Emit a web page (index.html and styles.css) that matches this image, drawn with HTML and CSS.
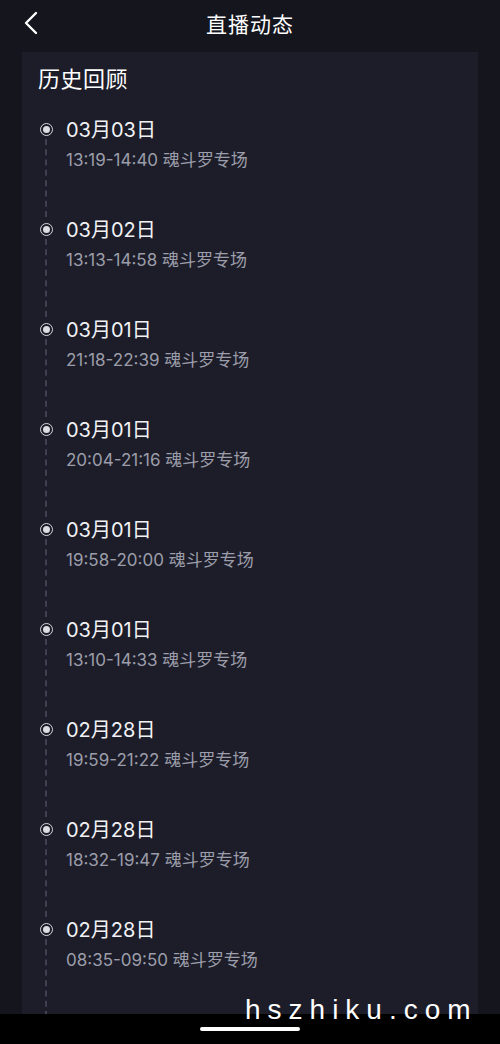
FILE: index.html
```html
<!DOCTYPE html>
<html lang="zh-CN">
<head>
    <meta charset="UTF-8">
    <meta name="viewport" content="width=device-width, initial-scale=1.0">
    <title>直播动态</title>
    <link rel="stylesheet" href="styles.css">
</head>
<body>
    <div class="page">
        <header class="topbar">
            <a href="#" class="back" aria-label="返回">
                <svg width="14" height="24" viewBox="0 0 14 24">
                    <path d="M12 2 L2 12 L12 22" fill="none" stroke="#fff" stroke-width="2.4" stroke-linecap="round" stroke-linejoin="round"/>
                </svg>
            </a>
            <h1>直播动态</h1>
        </header>

        <!-- 历史回顾 -->
        <section class="card">
            <h2>历史回顾</h2>
            <ul class="timeline">
                <li class="item">
                    <div class="rail"><span class="dot"></span><span class="line"></span></div>
                    <div class="info">
                        <div class="date">03月03日</div>
                        <div class="time">13:19-14:40 魂斗罗专场</div>
                    </div>
                </li>
                <li class="item">
                    <div class="rail"><span class="dot"></span><span class="line"></span></div>
                    <div class="info">
                        <div class="date">03月02日</div>
                        <div class="time">13:13-14:58 魂斗罗专场</div>
                    </div>
                </li>
                <li class="item">
                    <div class="rail"><span class="dot"></span><span class="line"></span></div>
                    <div class="info">
                        <div class="date">03月01日</div>
                        <div class="time">21:18-22:39 魂斗罗专场</div>
                    </div>
                </li>
                <li class="item">
                    <div class="rail"><span class="dot"></span><span class="line"></span></div>
                    <div class="info">
                        <div class="date">03月01日</div>
                        <div class="time">20:04-21:16 魂斗罗专场</div>
                    </div>
                </li>
                <li class="item">
                    <div class="rail"><span class="dot"></span><span class="line"></span></div>
                    <div class="info">
                        <div class="date">03月01日</div>
                        <div class="time">19:58-20:00 魂斗罗专场</div>
                    </div>
                </li>
                <li class="item">
                    <div class="rail"><span class="dot"></span><span class="line"></span></div>
                    <div class="info">
                        <div class="date">03月01日</div>
                        <div class="time">13:10-14:33 魂斗罗专场</div>
                    </div>
                </li>
                <li class="item">
                    <div class="rail"><span class="dot"></span><span class="line"></span></div>
                    <div class="info">
                        <div class="date">02月28日</div>
                        <div class="time">19:59-21:22 魂斗罗专场</div>
                    </div>
                </li>
                <li class="item">
                    <div class="rail"><span class="dot"></span><span class="line"></span></div>
                    <div class="info">
                        <div class="date">02月28日</div>
                        <div class="time">18:32-19:47 魂斗罗专场</div>
                    </div>
                </li>
                <li class="item">
                    <div class="rail"><span class="dot"></span><span class="line"></span></div>
                    <div class="info">
                        <div class="date">02月28日</div>
                        <div class="time">08:35-09:50 魂斗罗专场</div>
                    </div>
                </li>
            </ul>
        </section>

        <footer class="homebar">
            <span class="indicator"></span>
        </footer>
        <div class="watermark">hszhiku.com</div>
    </div>
</body>
</html>
```

FILE: styles.css
```css
* {
    margin: 0;
    padding: 0;
    box-sizing: border-box;
}
body {
    font-family: 'Inter', 'Noto Sans CJK SC', sans-serif;
    background-color: #14151d;
    color: #fff;
    width: 500px;
    height: 1044px;
    overflow: hidden;
}
.page {
    position: relative;
    display: flex;
    flex-direction: column;
    height: 100%;
}
.topbar {
    position: relative;
    height: 46px;
    display: flex;
    align-items: center;
    justify-content: center;
}
.topbar h1 {
    font-size: 21px;
    font-weight: 400;
    letter-spacing: 1px;
}
.back {
    position: absolute;
    left: 24px;
    top: 11px;
    display: flex;
}
.card {
    flex: 1;
    margin: 6px 22px 0;
    padding: 12px 16px 0;
    background-color: #1c1d29;
    overflow: hidden;
}
.card h2 {
    font-size: 22px;
    font-weight: 400;
    line-height: 30px;
    letter-spacing: 0.5px;
    margin-bottom: 23px;
}
.timeline {
    list-style: none;
}
.item {
    display: grid;
    grid-template-columns: 16px 1fr;
    column-gap: 12px;
    height: 100px;
}
.rail {
    display: flex;
    flex-direction: column;
    align-items: center;
}
.dot {
    width: 13px;
    height: 13px;
    margin-top: 6px;
    border-radius: 50%;
    border: 1.5px solid #d4d5dc;
    display: flex;
    align-items: center;
    justify-content: center;
}
.dot::after {
    content: "";
    width: 7px;
    height: 7px;
    border-radius: 50%;
    background-color: #dcdde3;
}
.line {
    flex: 1;
    margin-top: 3px;
    border-left: 2px dashed #3f4152;
}
.date {
    font-size: 20px;
    line-height: 26px;
    color: #f2f2f5;
}
.time {
    margin-top: 6px;
    font-size: 17px;
    line-height: 22px;
    color: #9c9daa;
}
.homebar {
    height: 30px;
    background-color: #000;
    display: flex;
    justify-content: center;
}
.indicator {
    width: 100px;
    height: 4px;
    margin-top: 13px;
    border-radius: 2px;
    background-color: #fff;
}
.watermark {
    position: absolute;
    left: 245px;
    top: 994px;
    font-family: 'Liberation Sans', sans-serif;
    font-size: 28px;
    letter-spacing: 7px;
    color: #fff;
}
```
